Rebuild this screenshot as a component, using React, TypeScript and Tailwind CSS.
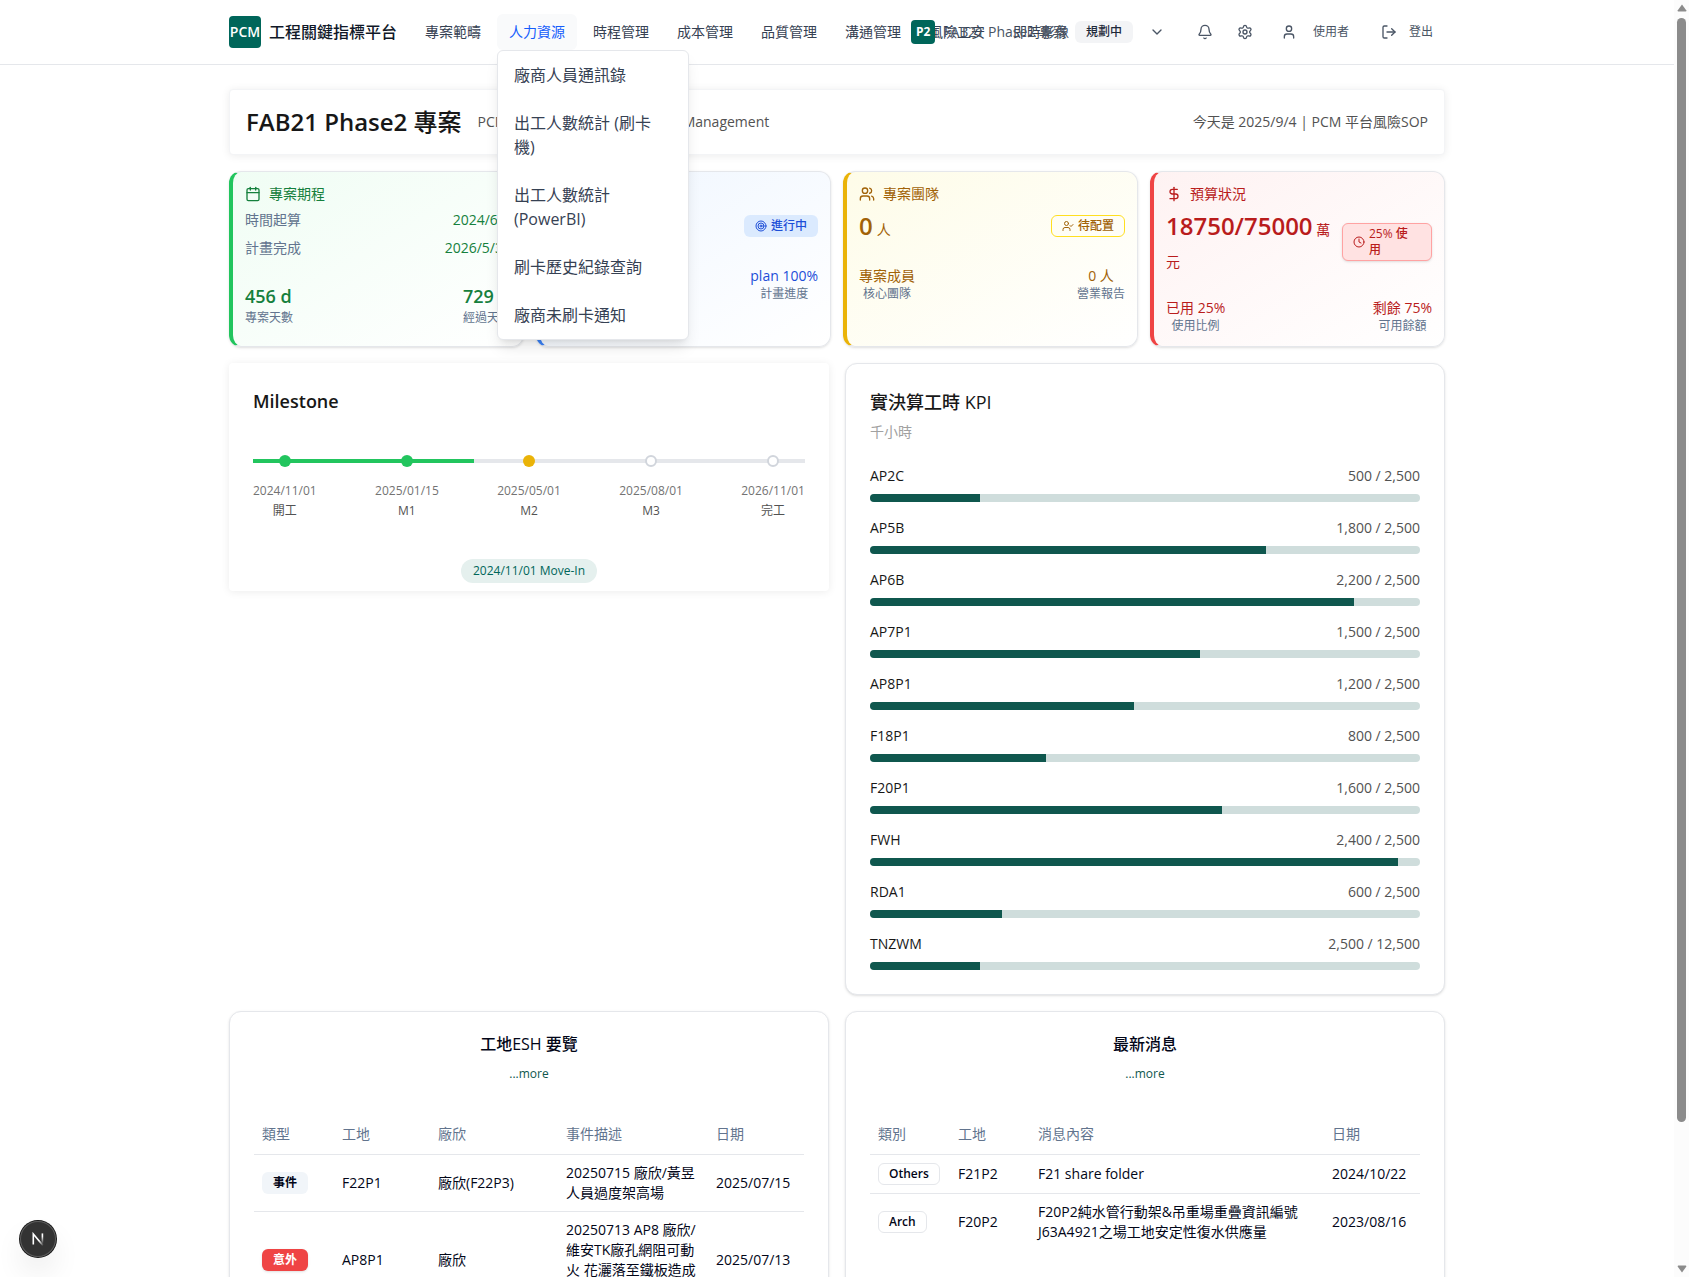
import type { ReactNode } from "react";
import {
  Bell,
  Calendar,
  ChevronDown,
  Clock,
  DollarSign,
  LogOut,
  Settings,
  Target,
  TrendingUp,
  User,
  UserCheck,
  Users,
} from "lucide-react";

const NAV = ["專案範疇", "人力資源", "時程管理", "成本管理", "品質管理", "溝通管理", "風險工安", "即時影像"];

const MENU = ["廠商人員通訊錄", "出工人數統計 (刷卡\n機)", "出工人數統計\n(PowerBI)", "刷卡歷史紀錄查詢", "廠商未刷卡通知"];

const MILESTONES = [
  { date: "2024/11/01", name: "開工", dot: "bg-[#22c55e]" },
  { date: "2025/01/15", name: "M1", dot: "bg-[#22c55e]" },
  { date: "2025/05/01", name: "M2", dot: "bg-[#eab308]" },
  { date: "2025/08/01", name: "M3", dot: "border-2 border-gray-300 bg-white" },
  { date: "2026/11/01", name: "完工", dot: "border-2 border-gray-300 bg-white" },
];

const KPIS = [
  { name: "AP2C", used: 500, total: 2500 },
  { name: "AP5B", used: 1800, total: 2500 },
  { name: "AP6B", used: 2200, total: 2500 },
  { name: "AP7P1", used: 1500, total: 2500 },
  { name: "AP8P1", used: 1200, total: 2500 },
  { name: "F18P1", used: 800, total: 2500 },
  { name: "F20P1", used: 1600, total: 2500 },
  { name: "FWH", used: 2400, total: 2500 },
  { name: "RDA1", used: 600, total: 2500 },
  { name: "TNZWM", used: 2500, total: 12500 },
];

function Header() {
  return (
    <header className="relative z-20 border-b border-gray-200 bg-white">
      <div className="mx-auto flex h-16 max-w-7xl items-center px-8">
        <a href="#" className="flex shrink-0 items-center gap-2">
          <span className="flex size-8 items-center justify-center rounded bg-[#00665a] text-sm font-semibold text-white">
            PCM
          </span>
          <span className="text-base font-medium whitespace-nowrap text-gray-900">工程關鍵指標平台</span>
        </a>
        <nav className="ml-4 flex min-w-0 flex-1 gap-1">
          {NAV.map((label) =>
            label === "人力資源" ? (
              <div key={label} className="relative shrink-0">
                <button
                  type="button"
                  aria-expanded="true"
                  className="block rounded-md bg-gray-50 px-3 py-2 text-sm whitespace-nowrap text-blue-600"
                >
                  {label}
                </button>
                <ul className="absolute top-full left-0 w-48 rounded-md border border-gray-200 bg-white shadow-lg">
                  {MENU.map((item) => (
                    <li key={item}>
                      <a href="#" className="block px-4 py-3 text-base whitespace-pre-line text-gray-700">
                        {item}
                      </a>
                    </li>
                  ))}
                </ul>
              </div>
            ) : (
              <button
                key={label}
                type="button"
                className="block shrink-0 rounded-md px-3 py-2 text-sm whitespace-nowrap text-gray-700"
              >
                {label}
              </button>
            ),
          )}
        </nav>
        <div className="flex shrink-0 items-center text-gray-600">
          <button type="button" className="flex h-9 items-center gap-2 px-3">
            <span className="flex size-6 items-center justify-center rounded bg-[#00665a] text-xs font-bold text-white">
              P2
            </span>
            <span className="text-sm whitespace-nowrap">FAB21 Phase2 專案</span>
            <span className="flex h-[22px] items-center rounded-md bg-gray-100 px-[11px] text-xs font-medium whitespace-nowrap text-gray-800">
              規劃中
            </span>
            <ChevronDown className="ml-2 size-4" />
          </button>
          <button type="button" aria-label="通知" className="ml-2 flex h-9 w-10 items-center justify-center">
            <Bell className="size-4" />
          </button>
          <button type="button" aria-label="設定" className="flex h-9 w-10 items-center justify-center">
            <Settings className="size-4" />
          </button>
          <button type="button" className="ml-4 flex h-9 items-center gap-4 text-xs">
            <User className="size-4" />
            使用者
          </button>
          <button type="button" className="ml-5 flex h-9 items-center gap-3 px-3 text-xs">
            <LogOut className="size-4" />
            登出
          </button>
        </div>
      </div>
    </header>
  );
}

function StatCard({
  tone,
  icon,
  title,
  children,
}: {
  tone: string;
  icon: ReactNode;
  title: string;
  children: ReactNode;
}) {
  return (
    <section
      className={`rounded-xl border border-l-4 border-gray-200 bg-linear-to-br to-white p-3 shadow-sm ${tone}`}
    >
      <h2 className="mb-1.5 flex items-center gap-2 text-sm">
        {icon}
        {title}
      </h2>
      {children}
    </section>
  );
}

function Pair({ value, label }: { value: string; label: string }) {
  return (
    <div className="text-center">
      <div className="text-sm">{value}</div>
      <div className="text-xs text-slate-500">{label}</div>
    </div>
  );
}

function StatCards() {
  return (
    <div className="mt-4 grid grid-cols-4 gap-3">
      <StatCard
        tone="border-l-[#22c55e] from-green-50 text-[#15803d]"
        icon={<Calendar className="size-4" />}
        title="專案期程"
      >
        <dl className="flex flex-col gap-2 text-sm">
          <div className="flex justify-between">
            <dt className="text-slate-500">時間起算</dt>
            <dd>2024/6/1</dd>
          </div>
          <div className="flex justify-between">
            <dt className="text-slate-500">計畫完成</dt>
            <dd>2026/5/31</dd>
          </div>
        </dl>
        <div className="mt-6 flex justify-between">
          <div>
            <div className="text-lg font-semibold">456 d</div>
            <div className="text-xs text-slate-500">專案天數</div>
          </div>
          <div>
            <div className="text-lg font-semibold">729 d</div>
            <div className="text-xs text-slate-500">經過天數</div>
          </div>
        </div>
      </StatCard>

      <StatCard
        tone="border-l-[#3b82f6] from-blue-50 text-[#1d4ed8]"
        icon={<TrendingUp className="size-4" />}
        title="專案進度"
      >
        <div className="flex items-center justify-between">
          <div className="text-2xl font-semibold">0%</div>
          <span className="flex items-center gap-1 rounded-md border border-transparent bg-blue-100 px-2.5 py-0.5 text-xs font-medium">
            <Target className="size-3" />
            進行中
          </span>
        </div>
        <div className="mt-6 flex justify-between">
          <Pair value="act 0%" label="實際進度" />
          <Pair value="plan 100%" label="計畫進度" />
        </div>
      </StatCard>

      <StatCard
        tone="border-l-[#eab308] from-yellow-50 text-[#a16207]"
        icon={<Users className="size-4" />}
        title="專案團隊"
      >
        <div className="flex items-center justify-between">
          <div className="text-2xl font-semibold">
            0<span className="ml-1 text-sm font-normal">人</span>
          </div>
          <span className="flex items-center gap-1 rounded-md border border-yellow-300 px-2.5 py-0.5 text-xs font-medium">
            <UserCheck className="size-3" />
            待配置
          </span>
        </div>
        <div className="mt-6 flex justify-between">
          <Pair value="專案成員" label="核心團隊" />
          <Pair value="0 人" label="營業報告" />
        </div>
      </StatCard>

      <StatCard
        tone="border-l-[#ef4444] from-red-50 text-[#b91c1c]"
        icon={<DollarSign className="size-4" />}
        title="預算狀況"
      >
        <div className="flex items-center justify-between">
          <div className="text-2xl font-semibold">
            18750/75000<span className="text-sm font-normal"> 萬元</span>
          </div>
          <span className="flex w-[90px] shrink-0 items-center gap-1 rounded-md border border-red-300 bg-red-100 px-2.5 py-0.5 text-xs font-medium shadow-sm">
            <Clock className="size-3 shrink-0" />
            <span>
              25% 使
              <br />用
            </span>
          </span>
        </div>
        <div className="mt-6 flex justify-between">
          <Pair value="已用 25%" label="使用比例" />
          <Pair value="剩餘 75%" label="可用餘額" />
        </div>
      </StatCard>
    </div>
  );
}

function Milestone() {
  return (
    <section className="self-start rounded bg-white px-6 pt-6 pb-2 shadow-[0_1px_8px_rgba(0,0,0,0.08)]">
      <h2 className="text-lg font-semibold text-neutral-900">Milestone</h2>
      <div className="relative mt-10">
        <div className="absolute inset-x-0 top-1 h-1 bg-gray-200">
          <div className="h-1 w-2/5 bg-[#22c55e]" />
        </div>
        <ol className="relative flex justify-between">
          {MILESTONES.map((m) => (
            <li key={m.name} className="flex flex-col items-center text-xs">
              <span className={`size-3 rounded-full ${m.dot}`} />
              <span className="mt-4 text-neutral-500">{m.date}</span>
              <span className="mt-1 text-neutral-600">{m.name}</span>
            </li>
          ))}
        </ol>
      </div>
      <div className="mt-10 flex justify-center">
        <span className="rounded-full bg-[#e5f0ee] px-3 py-1 text-xs text-[#00665a]">2024/11/01 Move-In</span>
      </div>
    </section>
  );
}

function Kpi() {
  return (
    <section className="rounded-xl border border-gray-200 bg-white p-6 shadow-sm">
      <h2 className="text-lg font-medium text-neutral-900">實決算工時 KPI</h2>
      <p className="mt-1.5 text-sm text-neutral-400">千小時</p>
      <ul className="mt-6 flex flex-col gap-4">
        {KPIS.map((k) => (
          <li key={k.name}>
            <div className="flex justify-between text-sm">
              <span className="text-neutral-900">{k.name}</span>
              <span className="text-neutral-600">
                {k.used.toLocaleString("en-US")} / {k.total.toLocaleString("en-US")}
              </span>
            </div>
            <div className="mt-2 h-2 overflow-hidden rounded bg-[#cfdddc]">
              <div className="h-full bg-[#0f574e]" style={{ width: `${(k.used / k.total) * 100}%` }} />
            </div>
          </li>
        ))}
      </ul>
    </section>
  );
}

function TableCard({ title, children }: { title: string; children: ReactNode }) {
  return (
    <section className="rounded-xl border border-gray-200 bg-white p-6 shadow-sm">
      <div className="flex flex-col items-center gap-1.5 pb-6">
        <h2 className="text-base leading-4 font-medium text-slate-950">{title}</h2>
        <button type="button" className="h-8 px-3 text-xs text-[#0f574e]">
          ...more
        </button>
      </div>
      {children}
    </section>
  );
}

function Th({ width = "", children }: { width?: string; children: ReactNode }) {
  return <th className={`h-10 px-2 text-left align-middle font-normal text-slate-500 ${width}`}>{children}</th>;
}

function Td({ children }: { children: ReactNode }) {
  return <td className="p-2 align-middle">{children}</td>;
}

function Tag({ tone, children }: { tone: string; children: ReactNode }) {
  return (
    <span className={`flex w-fit rounded-md border px-2.5 py-0.5 text-xs font-semibold ${tone}`}>{children}</span>
  );
}

function Tables() {
  return (
    <div className="mt-4 grid grid-cols-2 gap-4">
      <TableCard title="工地ESH 要覽">
        <table className="w-full table-fixed text-sm text-slate-950">
          <thead>
            <tr className="border-b border-gray-200">
              <Th width="w-20">類型</Th>
              <Th width="w-24">工地</Th>
              <Th width="w-32">廠欣</Th>
              <Th>事件描述</Th>
              <Th width="w-24">日期</Th>
            </tr>
          </thead>
          <tbody>
            <tr className="border-b border-gray-200">
              <Td>
                <Tag tone="border-transparent bg-slate-100">事件</Tag>
              </Td>
              <Td>F22P1</Td>
              <Td>廠欣(F22P3)</Td>
              <Td>20250715 廠欣/黃昱人員過度架高場</Td>
              <Td>2025/07/15</Td>
            </tr>
            <tr>
              <Td>
                <Tag tone="border-transparent bg-[#ef4444] text-white shadow-sm">意外</Tag>
              </Td>
              <Td>AP8P1</Td>
              <Td>廠欣</Td>
              <Td>20250713 AP8 廠欣/維安TK廠孔網阻可動火 花灑落至鐵板造成燃燒</Td>
              <Td>2025/07/13</Td>
            </tr>
          </tbody>
        </table>
      </TableCard>
      <TableCard title="最新消息">
        <table className="w-full table-fixed text-sm text-slate-950">
          <thead>
            <tr className="border-b border-gray-200">
              <Th width="w-20">類別</Th>
              <Th width="w-20">工地</Th>
              <Th>消息內容</Th>
              <Th width="w-24">日期</Th>
            </tr>
          </thead>
          <tbody>
            <tr className="border-b border-gray-200">
              <Td>
                <Tag tone="border-gray-200">Others</Tag>
              </Td>
              <Td>F21P2</Td>
              <Td>F21 share folder</Td>
              <Td>2024/10/22</Td>
            </tr>
            <tr>
              <Td>
                <Tag tone="border-gray-200">Arch</Tag>
              </Td>
              <Td>F20P2</Td>
              <Td>F20P2純水管行動架&amp;吊重場重疊資訊編號J63A4921之場工地安定性復水供應量</Td>
              <Td>2023/08/16</Td>
            </tr>
          </tbody>
        </table>
      </TableCard>
    </div>
  );
}

function ScrollRail() {
  return (
    <div aria-hidden="true" className="flex w-[15px] shrink-0 flex-col items-center bg-[#fcfcfc] py-1">
      <svg viewBox="0 0 10 8" className="h-2 w-[10px] fill-[#8b8b8b]">
        <path d="M5 0.5 9.2 6.2Q9.6 7.5 8.6 7.5H1.4Q0.4 7.5 0.8 6.2Z" />
      </svg>
      <div className="my-1.5 flex min-h-0 flex-1 flex-col">
        <div className="h-[89%] w-[9px] rounded-full bg-[#8b8b8b]" />
      </div>
      <svg viewBox="0 0 10 8" className="h-2 w-[10px] fill-[#8b8b8b]">
        <path d="M5 7.5 0.8 1.8Q0.4 0.5 1.4 0.5H8.6Q9.6 0.5 9.2 1.8Z" />
      </svg>
    </div>
  );
}

export default function App() {
  return (
    <div className="flex h-screen bg-white font-['Open_Sans','Noto_Sans_CJK_TC',sans-serif]">
      <div className="min-w-0 flex-1 overflow-x-hidden overflow-y-auto [scrollbar-width:none]">
        <Header />
        <main className="mx-auto max-w-7xl px-8 py-6">
          <section className="flex items-center justify-between rounded border border-gray-100 bg-white p-4 shadow-[0_1px_8px_rgba(0,0,0,0.08)]">
            <div className="flex items-center gap-4">
              <h1 className="text-2xl font-medium text-neutral-900">
                <span className="font-semibold">FAB21 Phase2</span> 專案
              </h1>
              <p className="text-sm text-neutral-600">PCM Professional Construction Management</p>
            </div>
            <p className="text-sm text-neutral-600">今天是 2025/9/4 | PCM 平台風險SOP</p>
          </section>
          <StatCards />
          <div className="mt-4 grid grid-cols-2 gap-4">
            <Milestone />
            <Kpi />
          </div>
          <Tables />
        </main>
      </div>
      <ScrollRail />
      <button
        type="button"
        aria-label="Next.js"
        className="fixed bottom-5 left-5 z-30 flex size-9 items-center justify-center rounded-full bg-[#333333] shadow-[0_0_0_1px_#171717,inset_0_0_0_1px_#5c5c5c,0_16px_32px_-8px_rgba(0,0,0,0.24)]"
      >
        <svg viewBox="0 0 14 14" className="size-[14px]" fill="none">
          <defs>
            <linearGradient id="nStem" x1="0" y1="1" x2="0" y2="12" gradientUnits="userSpaceOnUse">
              <stop offset="0.3" stopColor="#fff" />
              <stop offset="1" stopColor="#fff" stopOpacity="0" />
            </linearGradient>
            <linearGradient id="nDiag" x1="2" y1="1" x2="12" y2="14" gradientUnits="userSpaceOnUse">
              <stop offset="0.6" stopColor="#fff" />
              <stop offset="1" stopColor="#fff" stopOpacity="0" />
            </linearGradient>
          </defs>
          <path d="M2.3 12.5V2L12 13.6" stroke="url(#nDiag)" strokeWidth="1.6" />
          <path d="M11.4 1.4V12" stroke="url(#nStem)" strokeWidth="1.6" />
        </svg>
      </button>
    </div>
  );
}
